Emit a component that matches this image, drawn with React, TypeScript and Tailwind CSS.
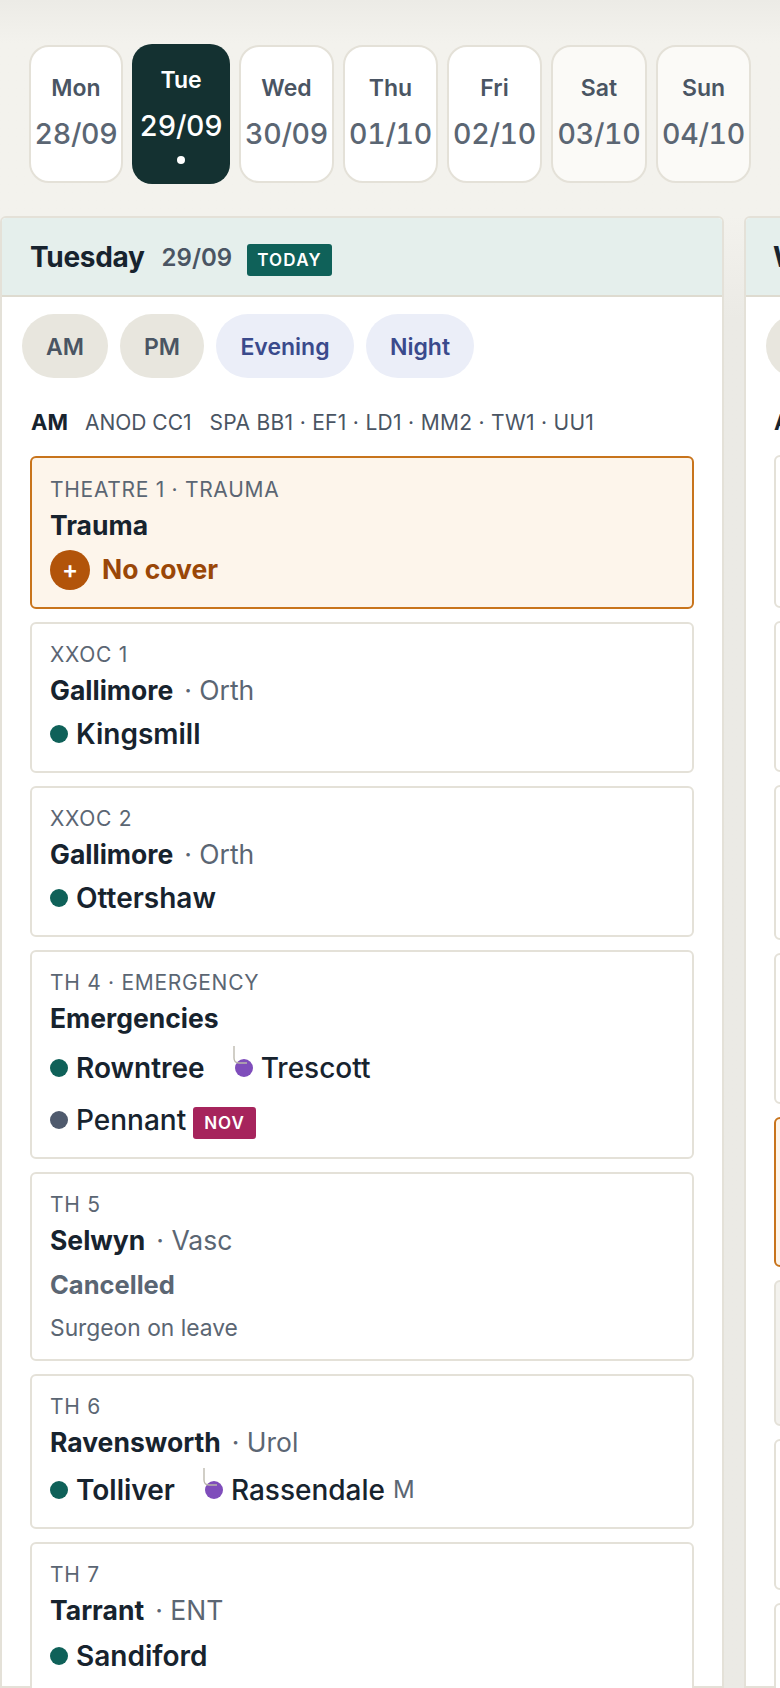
const days = [
  { d: "Mon", n: "28/09", w: "w-[94px] bg-white" },
  { d: "Tue", n: "29/09", w: "w-[98px]", today: true },
  { d: "Wed", n: "30/09", w: "w-[95px] bg-white" },
  { d: "Thu", n: "01/10", w: "w-[95px] bg-white" },
  { d: "Fri", n: "02/10", w: "w-[95px] bg-white" },
  { d: "Sat", n: "03/10", w: "w-[96px] bg-[#fbfaf7]" },
  { d: "Sun", n: "04/10", w: "w-[95px] bg-[#fbfaf7]" },
];

function Dot({ c }: { c: string }) {
  return <span className={"h-[18px] w-[18px] shrink-0 rounded-full " + c} />;
}

function Hook() {
  return (
    <svg className="absolute -left-[2px] -top-[4px] z-10" width="16" height="20" viewBox="0 0 16 20" fill="none">
      <path d="M1 0V12Q1 17 6 17H14" stroke="#b9b5aa" strokeWidth="1.3" />
    </svg>
  );
}

function Label({ children }: { children: React.ReactNode }) {
  return <div className="text-[21px] leading-[24px] tracking-[0.7px] text-[#5b6673]">{children}</div>;
}

function Title({ name, spec }: { name: string; spec?: string }) {
  return (
    <div className="mt-[7px] text-[26.5px] leading-[32px] text-[#17232e]">
      <span className="font-bold">{name}</span>
      {spec && <span className="ml-[11px] font-normal text-[#5b6673]">· {spec}</span>}
    </div>
  );
}

function Person({ c, name, bold }: { c: string; name: string; bold?: boolean }) {
  return (
    <div className="flex items-center gap-[8px]">
      <Dot c={c} />
      <span className={"text-[28px] leading-[36px] text-[#17232e] " + (bold ? "font-semibold" : "font-medium")}>{name}</span>
    </div>
  );
}

const green = "bg-[#0f6159]";
const purple = "bg-[#7f4dbb]";

function Card({ className, children }: { className: string; children?: React.ReactNode }) {
  return <div className={"rounded-[6px] border-2 px-[18px] pt-[19px] " + className}>{children}</div>;
}

const plain = "border-[#e4e1d8] bg-white";

export default function App() {
  return (
    <div className="h-[1688px] w-[780px] overflow-hidden bg-[#f3f2ed] font-['Inter',sans-serif] text-[#17232e]">
      <div className="flex h-[216px] gap-[9px] bg-gradient-to-b from-[#ecebe6] from-0% to-[#f3f2ed] to-[20%] pl-[29px] pt-[44px]">
        {days.map((x) =>
          x.today ? (
            <div key={x.d} className={"flex h-[140px] flex-col items-center rounded-[20px] bg-[#143131] pt-[22px] text-white " + x.w}>
              <span className="text-[23px] font-semibold leading-[28px]">{x.d}</span>
              <span className="mt-[13px] text-[28.5px] font-[450] leading-[38px] tracking-[-0.3px] tabular-nums">{x.n}</span>
              <span className="mt-[11px] h-[8px] w-[8px] rounded-full bg-white" />
            </div>
          ) : (
            <div key={x.d} className={"mt-[1px] flex h-[138px] flex-col items-center rounded-[20px] border-2 border-[#e4e1d8] pt-[27px] " + x.w}>
              <span className="text-[23px] font-semibold leading-[28px] text-[#4a5563]">{x.d}</span>
              <span className="mt-[13px] text-[28.5px] font-[450] leading-[38px] tracking-[-0.3px] text-[#5b6673] tabular-nums">{x.n}</span>
            </div>
          )
        )}
      </div>

      <div className="flex h-[1472px] gap-[20px] bg-gradient-to-b from-[#f3f2ed] to-[#ebeae5] to-[7%]">
        <div className="h-full w-[724px] shrink-0 rounded-t-[6px] border-2 border-[#e4e1d8] bg-white">
          <div className="flex h-[79px] items-center rounded-t-[4px] border-b-2 border-[#dedbd0] bg-[#e5efec] pl-[28px]">
            <span className="text-[28px] font-bold tracking-[-0.3px] text-[#17232e]">Tuesday</span>
            <span className="ml-[17px] mt-[3px] text-[24px] font-semibold text-[#4a5563]">29/09</span>
            <span className="ml-[15px] mt-[6px] rounded-[3px] bg-[#0f6159] px-[10px] py-[4px] text-[17px] font-semibold leading-[24px] tracking-[1.2px] text-white">TODAY</span>
          </div>
          <div className="flex gap-[12px] pl-[20px] pt-[17px]">
            <span className="flex h-[64px] w-[86px] items-center justify-center rounded-full bg-[#e8e6de] pt-[3px] text-[23px] font-semibold text-[#4a5563]">AM</span>
            <span className="flex h-[64px] w-[84px] items-center justify-center rounded-full bg-[#e8e6de] pt-[3px] text-[23px] font-semibold text-[#4a5563]">PM</span>
            <span className="flex h-[64px] w-[138px] items-center justify-center rounded-full bg-[#ebeef8] pt-[3px] text-[23px] font-semibold text-[#3a4a8c]">Evening</span>
            <span className="flex h-[64px] w-[108px] items-center justify-center rounded-full bg-[#ebeef8] pt-[3px] text-[23px] font-semibold text-[#3a4a8c]">Night</span>
          </div>
          <div className="mt-[28px] flex items-baseline pl-[29px] leading-[32px]">
            <span className="text-[22px] font-bold">AM</span>
            <span className="ml-[17px] text-[21px] text-[#4a5563]">ANOD CC1</span>
            <span className="ml-[18px] text-[21px] tracking-[0.3px] text-[#4a5563]">SPA BB1 · EF1 · LD1 · MM2 · TW1 · UU1</span>
          </div>
          <div className="ml-[28px] mt-[17px] flex w-[664px] flex-col gap-[13px]">
            <Card className="h-[153px] border-[#c8741c] bg-[#fdf5eb]">
              <div className="mb-[4px] pt-[1px]"><Label>THEATRE 1 · TRAUMA</Label></div>
              <Title name="Trauma" />
              <div className="mt-[9px] flex items-center gap-[12px]">
                <span className="flex h-[40px] w-[40px] items-center justify-center rounded-full bg-[#b2540a] text-[24px] font-semibold text-white">+</span>
                <span className="text-[26.5px] font-bold text-[#9a4708]">No cover</span>
              </div>
            </Card>
            <Card className={"h-[151px] " + plain}>
              <Label>XXOC 1</Label>
              <Title name="Gallimore" spec="Orth" />
              <div className="mt-[10px]"><Person c={green} name="Kingsmill" bold /></div>
            </Card>
            <Card className={"h-[151px] " + plain}>
              <Label>XXOC 2</Label>
              <Title name="Gallimore" spec="Orth" />
              <div className="mt-[10px]"><Person c={green} name="Ottershaw" bold /></div>
            </Card>
            <Card className={"h-[209px] " + plain}>
              <Label>TH 4 · EMERGENCY</Label>
              <Title name="Emergencies" />
              <div className="mt-[16px] flex items-center gap-[30px]">
                <Person c={green} name="Rowntree" bold />
                <div className="relative"><Hook /><Person c={purple} name="Trescott" /></div>
              </div>
              <div className="mt-[14px] flex items-center gap-[7px]">
                <Person c="bg-[#4f5a6d]" name="Pennant" />
                <span className="mt-[7px] rounded-[3px] bg-[#a6245c] px-[11px] py-[3px] text-[17px] font-semibold leading-[26px] tracking-[1px] text-white">NOV</span>
              </div>
            </Card>
            <Card className={"h-[189px] " + plain}>
              <Label>TH 5</Label>
              <Title name="Selwyn" spec="Vasc" />
              <div className="mt-[12px] text-[25.5px] font-bold leading-[34px] text-[#5b6673]">Cancelled</div>
              <div className="mt-[11px] text-[22.8px] leading-[30px] text-[#5b6673]">Surgeon on leave</div>
            </Card>
            <Card className={"h-[155px] " + plain}>
              <Label>TH 6</Label>
              <Title name="Ravensworth" spec="Urol" />
              <div className="mt-[14px] flex items-center gap-[30px]">
                <Person c={green} name="Tolliver" bold />
                <div className="relative flex items-center gap-[8px]">
                  <Hook />
                  <Person c={purple} name="Rassendale" />
                  <span className="text-[24px] text-[#5b6673]">M</span>
                </div>
              </div>
            </Card>
            <Card className={"h-[200px] " + plain}>
              <Label>TH 7</Label>
              <Title name="Tarrant" spec="ENT" />
              <div className="mt-[12px]"><Person c={green} name="Sandiford" bold /></div>
            </Card>
          </div>
        </div>

        <div className="h-full w-[724px] shrink-0 rounded-t-[6px] border-2 border-[#e4e1d8] bg-white">
          <div className="flex h-[79px] items-center rounded-t-[4px] border-b-2 border-[#dedbd0] bg-[#e5efec] pl-[27px]">
            <span className="text-[28px] font-bold tracking-[-0.3px]">Wednesday</span>
          </div>
          <div className="flex gap-[12px] pl-[20px] pt-[17px]">
            <span className="flex h-[64px] w-[86px] items-center justify-center rounded-full bg-[#e8e6de] pt-[3px] text-[23px] font-semibold text-[#4a5563]">AM</span>
          </div>
          <div className="mt-[28px] pl-[28px] text-[22px] font-bold leading-[32px]">AM</div>
          <div className="ml-[28px] mt-[17px] flex w-[664px] flex-col gap-[13px]">
            <Card className={"h-[153px] " + plain} />
            <Card className={"h-[151px] " + plain} />
            <Card className={"h-[155px] " + plain} />
            <Card className={"h-[151px] " + plain} />
            <Card className="h-[150px] border-[#c8741c] bg-[#fdf5eb]" />
            <Card className="h-[146px] border-[#e4e1d8] bg-[#f3f2ee]" />
            <Card className={"h-[151px] " + plain} />
            <Card className={"h-[151px] " + plain} />
          </div>
        </div>
      </div>
    </div>
  );
}
